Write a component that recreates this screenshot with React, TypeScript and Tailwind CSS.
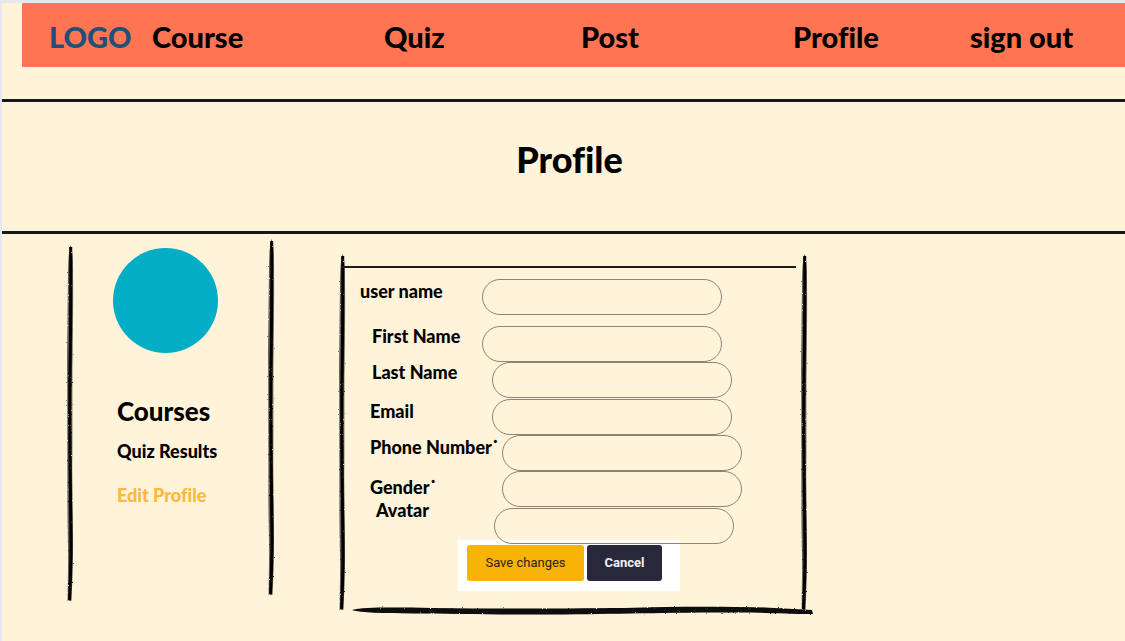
import React from "react";

const navItems = ["Course", "Quiz", "Post", "Profile", "sign out"];

const fields = [
  { id: "username", label: "user name", type: "text", row: "mb-[11px]", text: "pt-0.5", shift: "" },
  { id: "first", label: "First Name", type: "text", row: "", text: "pl-3", shift: "" },
  { id: "last", label: "Last Name", type: "text", row: "mb-px", text: "pl-3", shift: "ml-2.5" },
  { id: "email", label: "Email", type: "email", row: "", text: "pl-2.5 pt-0.5", shift: "ml-2.5" },
  { id: "phone", label: "Phone Number˙", type: "tel", row: "", text: "pl-2.5 pt-0.5", shift: "ml-5" },
  { id: "gender", label: "Gender˙", type: "text", row: "mb-px", text: "pl-2.5 pt-1.5", shift: "ml-5" },
  { id: "avatar", label: "Avatar", type: "text", row: "", text: "pl-4 -mt-2", shift: "ml-3" },
];

function BrushFilter() {
  return (
    <svg width="0" height="0" className="absolute" aria-hidden="true">
      <filter id="charcoal" x="-50%" y="-5%" width="200%" height="110%">
        <feTurbulence type="fractalNoise" baseFrequency="0.6" numOctaves="2" seed="4" result="noise" />
        <feDisplacementMap
          in="SourceGraphic"
          in2="noise"
          scale="2"
          xChannelSelector="R"
          yChannelSelector="G"
          result="rough"
        />
        <feGaussianBlur in="rough" stdDeviation="0.45" />
      </filter>
    </svg>
  );
}

function VerticalStroke({ className = "" }: { className?: string }) {
  return (
    <svg
      viewBox="0 0 10 356"
      width="10"
      height="356"
      className={"shrink-0 overflow-visible " + className}
      aria-hidden="true"
    >
      <g filter="url(#charcoal)">
        <path
          d="M5.6 -2 C7.4 2 8.2 12 8 30 C8.4 60 7.8 90 7.4 120 C7.2 150 7.6 190 7.2 220 C7.4 250 8.2 280 8 305 C8 325 7 340 6.4 354 L2.6 354 C2.8 335 3.2 320 3 300 C2.4 270 2.2 240 2.4 215 C2.2 180 2.4 150 2 115 C2.4 80 2.8 50 3 25 C3.2 12 4 2 5.6 -2 Z"
          fill="#111"
          fillOpacity="0.65"
        />
        <path
          d="M5.7 0 C6.2 60 5 110 4.8 150 C4.6 210 5.8 260 6 300 C5.8 325 5 340 4.6 353"
          fill="none"
          stroke="#000"
          strokeWidth="3"
        />
      </g>
    </svg>
  );
}

function HorizontalStroke() {
  return (
    <svg viewBox="0 0 460 12" preserveAspectRatio="none" className="h-3 w-full overflow-visible" aria-hidden="true">
      <path
        filter="url(#charcoal)"
        d="M0 5 C12 2 40 2.5 80 3 C140 4 210 3.5 270 3 C320 1.5 370 1.5 410 2.5 L457 5 L458 9 C440 9.5 410 7 370 7.5 C300 7.5 250 9.5 190 9.5 C140 10 100 8.5 60 8.5 C30 8 10 8 0 5 Z"
        fill="#080808"
      />
    </svg>
  );
}

export default function App() {
  return (
    <div className="min-h-screen bg-[#e7e8ee] pt-[3px] pl-0.5 font-['Lato','Noto_Sans',sans-serif] font-black text-black [font-variant-ligatures:none]">
      <BrushFilter />
      <div className="min-h-[638px] bg-[#fff3da]">
        <header className="pl-5">
          <nav className="grid h-16 grid-cols-[103fr_232fr_197fr_212fr_177fr_155fr] items-center bg-[#ff7452] pl-[27px] pt-1 text-[29px]">
            <span className="text-[#20507a]">LOGO</span>
            {navItems.map((item) => (
              <a key={item} href="#" className="whitespace-nowrap">
                {item}
              </a>
            ))}
          </nav>
        </header>

        <section className="mt-8 flex h-[135px] items-center justify-center border-y-[3px] border-[#161a16] pb-4 pl-3">
          <h1 className="text-4xl">Profile</h1>
        </section>

        <main className="flex items-start pl-[63px]">
          <aside className="flex pt-[7px]">
            <VerticalStroke className="mt-1.5" />
            <div className="flex w-[191px] flex-col items-start pl-[38px]">
              <div className="mt-[7px] size-[105px] rounded-full bg-[#02aec5]" />
              <nav className="mt-[42px] flex flex-col items-start pl-1">
                <a href="#" className="text-[26px] leading-8">
                  Courses
                </a>
                <a href="#" className="mt-3.5 text-lg leading-5">
                  Quiz Results
                </a>
                <a href="#" className="mt-6 text-lg leading-5 text-[#ffb740]">
                  Edit Profile
                </a>
              </nav>
            </div>
            <VerticalStroke />
          </aside>

          <div className="ml-[61px] mt-[22px]">
            <div className="flex">
              <VerticalStroke />
              <form className="-ml-1.5 w-[459px]" onSubmit={(e) => e.preventDefault()}>
                <div className="mt-2.5 mr-1 border-t-2 border-[#1c1c1c]" />
                <div className="pl-[19px] pt-[11px]">
                  {fields.map((f) => (
                    <div key={f.id} className={"flex items-start " + f.row}>
                      <label htmlFor={f.id} className={"w-[122px] shrink-0 whitespace-nowrap text-lg leading-5 " + f.text}>
                        {f.label}
                      </label>
                      <input
                        id={f.id}
                        type={f.type}
                        className={
                          "relative z-10 h-9 w-60 rounded-full border border-[#8a8375] bg-transparent px-4 text-base font-normal outline-none " +
                          f.shift
                        }
                      />
                    </div>
                  ))}
                </div>
                <div className="-mt-1 ml-[117px] flex h-[51px] w-[222px] items-start gap-[3px] bg-white pl-[9px] pt-[5px] font-['Roboto',sans-serif] text-[13px]">
                  <button type="submit" className="h-9 w-[117px] rounded-[3px] bg-[#f9b208] font-normal text-[#2b2410]">
                    Save changes
                  </button>
                  <button type="button" className="h-9 w-[75px] rounded-[3px] bg-[#29283b] font-bold text-[#f1f1f5]">
                    Cancel
                  </button>
                </div>
              </form>
              <VerticalStroke className="-ml-px" />
            </div>
            <div className="-mt-[7px] -mr-1.5 pl-[15px]">
              <HorizontalStroke />
            </div>
          </div>
        </main>
      </div>
    </div>
  );
}
